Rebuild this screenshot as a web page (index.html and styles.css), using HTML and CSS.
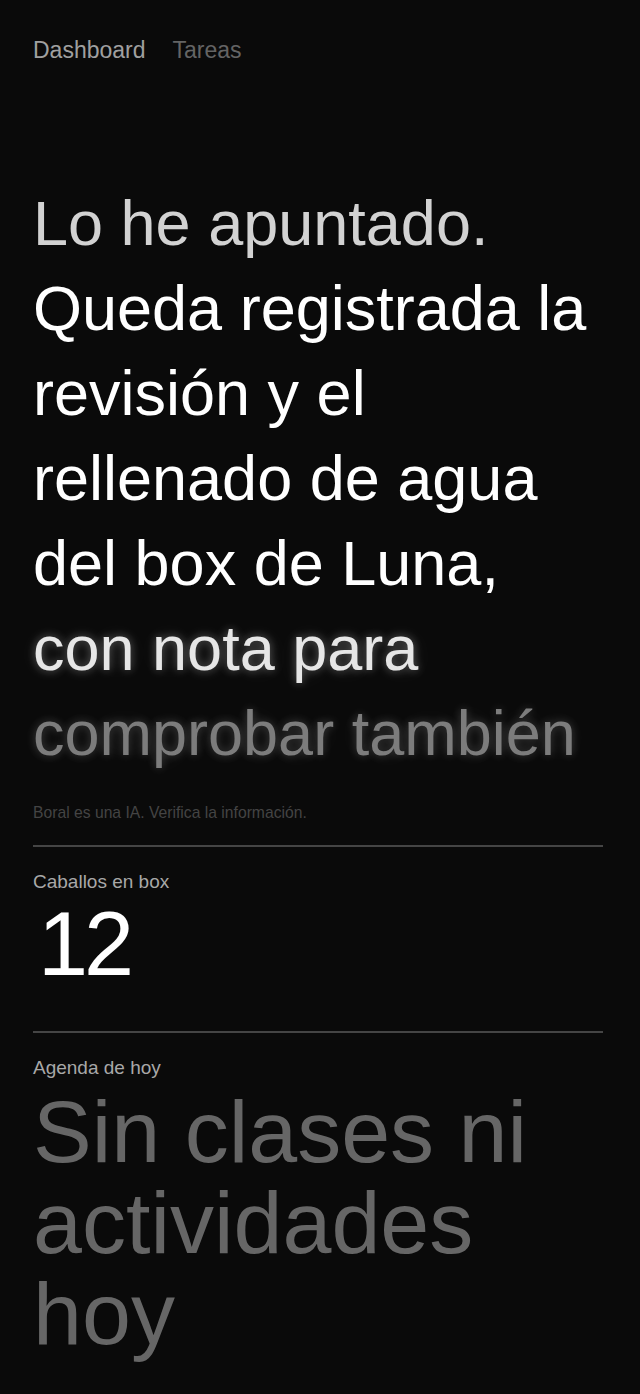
FILE: index.html
```html
<!DOCTYPE html>
<html lang="es">
<head>
<meta charset="utf-8">
<title>Dashboard</title>
<link rel="stylesheet" href="styles.css">
</head>
<body>
<div class="page">
  <nav class="nav">
    <span class="nav-item active">Dashboard</span>
    <span class="nav-item">Tareas</span>
  </nav>
  <h1 class="reply">
    <span class="seg seg-first">Lo he apuntado.</span>
    <span class="seg">Queda registrada la revisión y el rellenado de agua del box de Luna,</span>
    <span class="seg seg-glow">con nota para</span>
    <span class="seg seg-fade">comprobar también</span>
  </h1>
  <p class="disclaimer">Boral es una IA. Verifica la información.</p>
  <section class="stat">
    <div class="stat-label">Caballos en box</div>
    <div class="stat-value">12</div>
  </section>
  <section class="stat">
    <div class="stat-label">Agenda de hoy</div>
    <div class="stat-empty">Sin clases ni actividades hoy</div>
  </section>
</div>
</body>
</html>
```
FILE: styles.css
```css
html, body {
  margin: 0;
  padding: 0;
  background: #0a0a0a;
}
body {
  font-family: "Liberation Sans", Arial, sans-serif;
  color: #fff;
  height: 1394px;
  overflow: hidden;
}
.page {
  padding: 36px 37px 0 33px;
}
.nav {
  display: flex;
  gap: 27px;
  font-size: 23px;
  line-height: 28px;
}
.nav-item {
  color: #646464;
}
.nav-item.active {
  color: #a0a0a0;
}
.reply {
  margin: 117px 0 0;
  font-weight: normal;
  font-size: 63px;
  line-height: 85px;
  letter-spacing: 0;
  color: #fff;
}
.seg-first {
  color: #d2d2d2;
}
.seg-glow {
  color: #e6e6e6;
  text-shadow: 0 0 10px rgba(255, 255, 255, 0.35), 0 0 24px rgba(255, 255, 255, 0.1);
}
.seg-fade {
  color: #7c7c7c;
  text-shadow: 0 0 10px rgba(255, 255, 255, 0.22), 0 0 26px rgba(255, 255, 255, 0.08);
}
.disclaimer {
  margin: 27px 0 0;
  font-size: 15.7px;
  line-height: 20px;
  color: #444;
}
.stat {
  margin-top: 22px;
  border-top: 2px solid #454545;
}
.stat + .stat {
  margin-top: 42px;
}
.stat-label {
  margin-top: 23px;
  font-size: 19px;
  line-height: 24px;
  color: #a8a8a8;
}
.stat-value {
  margin-top: 5px;
  padding-left: 5px;
  font-size: 90px;
  line-height: 90px;
  letter-spacing: -4px;
  color: #fff;
}
.stat-empty {
  margin-top: 6px;
  font-size: 88px;
  line-height: 91px;
  letter-spacing: 0;
  color: #666;
}
```
